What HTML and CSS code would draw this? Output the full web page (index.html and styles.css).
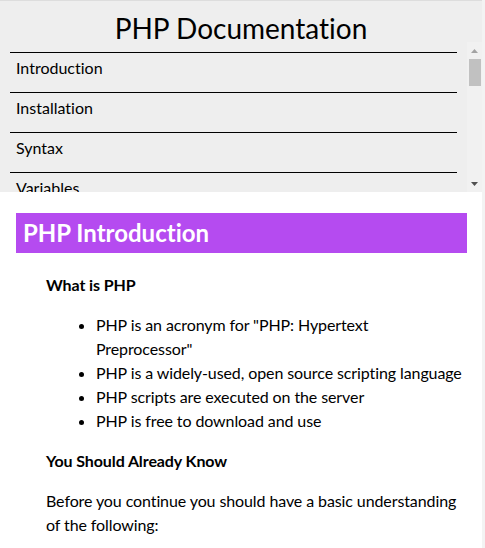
FILE: index.html
```html
<!DOCTYPE html>
<html lang="en">
<head>
<meta charset="utf-8">
<title>PHP Documentation</title>
<link rel="stylesheet" href="styles.css">
</head>
<body>
<div class="page">
  <header class="top">
    <h1 class="title">PHP Documentation</h1>
    <div class="nav-wrap">
      <nav class="nav">
        <a class="nav-item" href="#">Introduction</a>
        <a class="nav-item" href="#">Installation</a>
        <a class="nav-item" href="#">Syntax</a>
        <a class="nav-item" href="#">Variables</a>
        <a class="nav-item" href="#">Echo / Print</a>
        <a class="nav-item" href="#">Data Types</a>
        <a class="nav-item" href="#">Strings</a>
        <a class="nav-item" href="#">Constants</a>
        <a class="nav-item" href="#">Operators</a>
        <a class="nav-item" href="#">If...Else...Elseif</a>
        <a class="nav-item" href="#">Switch</a>
        <a class="nav-item" href="#">Loops</a>
        <a class="nav-item" href="#">Functions</a>
        <a class="nav-item" href="#">Arrays</a>
        <a class="nav-item" href="#">Superglobals</a>
      </nav>
      <div class="scrollbar" aria-hidden="true">
        <div class="sb-btn">
          <svg width="7" height="4" viewBox="0 0 7 4"><path d="M3.5 0 L7 4 L0 4 Z" fill="#a3a3a3"/></svg>
        </div>
        <div class="sb-track"><div class="sb-thumb"></div></div>
        <div class="sb-btn">
          <svg width="7" height="4" viewBox="0 0 7 4"><path d="M0 0 L7 0 L3.5 4 Z" fill="#505050"/></svg>
        </div>
      </div>
    </div>
  </header>
  <main class="main">
    <h2 class="section-title">PHP Introduction</h2>
    <div class="section-body">
      <p class="sub">What is PHP</p>
      <ul class="list">
        <li>PHP is an acronym for "PHP: Hypertext Preprocessor"</li>
        <li>PHP is a widely-used, open source scripting language</li>
        <li>PHP scripts are executed on the server</li>
        <li>PHP is free to download and use</li>
      </ul>
      <p class="sub">You Should Already Know</p>
      <p class="text">Before you continue you should have a basic understanding of the following:</p>
    </div>
  </main>
</div>
</body>
</html>
```

FILE: styles.css
```css
html {
  background: #f3f3f3;
}
body {
  margin: 0;
  font-family: Lato, "Noto Sans", sans-serif;
  font-variant-ligatures: none;
  color: #000;
  height: 548px;
  overflow: hidden;
}
.page {
  width: 482px;
}
.top {
  background: #eeeeee;
  border-top: 1px solid #dddddd;
}
.title {
  margin: 0;
  height: 41px;
  box-sizing: border-box;
  padding-top: 10px;
  line-height: 34px;
  font-size: 28px;
  font-weight: 400;
  text-align: center;
}
.nav-wrap {
  display: flex;
  height: 150px;
}
.nav {
  flex: 1;
  overflow: hidden;
  padding: 10px 10px 0 10px;
  display: flex;
  flex-direction: column;
}
.nav-item {
  flex: none;
  display: block;
  border-top: 1px solid #000;
  height: 40px;
  box-sizing: border-box;
  padding: 5px 6px 0;
  font-size: 16px;
  line-height: 19px;
  color: #000;
  text-decoration: none;
}
.scrollbar {
  width: 15px;
  background: #f1f1f1;
  display: flex;
  flex-direction: column;
}
.sb-btn {
  height: 17px;
  display: flex;
  align-items: center;
  justify-content: center;
}
.sb-track {
  flex: 1;
  padding: 0 1px 0 2px;
}
.sb-thumb {
  height: 27px;
  background: #c1c1c1;
}
.main {
  background: #fff;
  padding: 21px 15px 40px 16px;
}
.section-title {
  margin: 0 0 20px;
  height: 40px;
  background: #b54bf0;
  color: #fff;
  font-size: 24px;
  font-weight: 700;
  line-height: 40px;
  padding: 0 7px;
}
.section-body {
  padding-left: 30px;
  font-size: 16px;
  line-height: 24px;
  letter-spacing: -0.1px;
}
.sub {
  margin: 0 0 16px;
  font-weight: 700;
}
.list {
  margin: 0 0 16px;
  padding-left: 50px;
}
.text {
  margin: 0;
}
```
